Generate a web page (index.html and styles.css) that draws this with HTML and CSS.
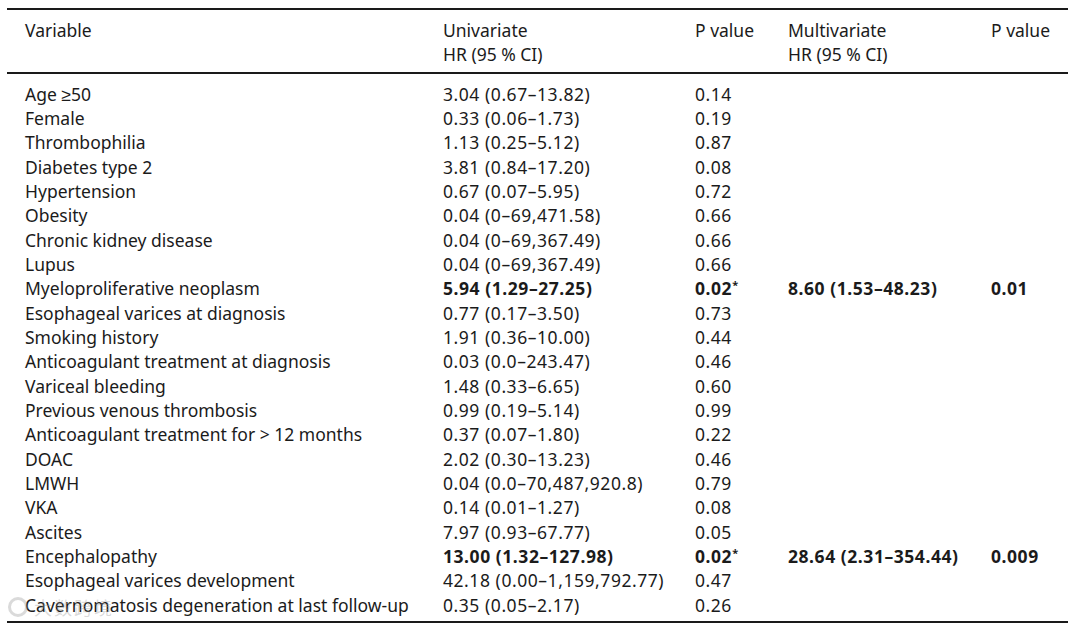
FILE: index.html
```html
<!DOCTYPE html>
<html>
<head>
<meta charset="utf-8">
<link rel="stylesheet" href="styles.css">
</head>
<body>
<div class="page">
  <table class="hr-table">
    <colgroup>
      <col class="c-var"><col class="c-uni"><col class="c-p1"><col class="c-multi"><col class="c-p2">
    </colgroup>
    <thead>
      <tr>
        <th class="first">Variable</th>
        <th>Univariate<br>HR (95 % CI)</th>
        <th>P value</th>
        <th>Multivariate<br>HR (95 % CI)</th>
        <th>P value</th>
      </tr>
    </thead>
    <tbody>
      <tr class="top"><td class="first">Age ≥50</td><td class="n">3.04 (0.67–13.82)</td><td class="n">0.14</td><td></td><td></td></tr>
      <tr><td class="first">Female</td><td class="n">0.33 (0.06–1.73)</td><td class="n">0.19</td><td></td><td></td></tr>
      <tr><td class="first">Thrombophilia</td><td class="n">1.13 (0.25–5.12)</td><td class="n">0.87</td><td></td><td></td></tr>
      <tr><td class="first">Diabetes type 2</td><td class="n">3.81 (0.84–17.20)</td><td class="n">0.08</td><td></td><td></td></tr>
      <tr><td class="first">Hypertension</td><td class="n">0.67 (0.07–5.95)</td><td class="n">0.72</td><td></td><td></td></tr>
      <tr><td class="first">Obesity</td><td class="n">0.04 (0–69,471.58)</td><td class="n">0.66</td><td></td><td></td></tr>
      <tr><td class="first">Chronic kidney disease</td><td class="n">0.04 (0–69,367.49)</td><td class="n">0.66</td><td></td><td></td></tr>
      <tr><td class="first">Lupus</td><td class="n">0.04 (0–69,367.49)</td><td class="n">0.66</td><td></td><td></td></tr>
      <tr><td class="first">Myeloproliferative neoplasm</td><td class="n b">5.94 (1.29–27.25)</td><td class="n b">0.02<sup>*</sup></td><td class="n b">8.60 (1.53–48.23)</td><td class="n b">0.01</td></tr>
      <tr><td class="first">Esophageal varices at diagnosis</td><td class="n">0.77 (0.17–3.50)</td><td class="n">0.73</td><td></td><td></td></tr>
      <tr><td class="first">Smoking history</td><td class="n">1.91 (0.36–10.00)</td><td class="n">0.44</td><td></td><td></td></tr>
      <tr><td class="first">Anticoagulant treatment at diagnosis</td><td class="n">0.03 (0.0–243.47)</td><td class="n">0.46</td><td></td><td></td></tr>
      <tr><td class="first">Variceal bleeding</td><td class="n">1.48 (0.33–6.65)</td><td class="n">0.60</td><td></td><td></td></tr>
      <tr><td class="first">Previous venous thrombosis</td><td class="n">0.99 (0.19–5.14)</td><td class="n">0.99</td><td></td><td></td></tr>
      <tr><td class="first">Anticoagulant treatment for &gt; 12 months</td><td class="n">0.37 (0.07–1.80)</td><td class="n">0.22</td><td></td><td></td></tr>
      <tr><td class="first">DOAC</td><td class="n">2.02 (0.30–13.23)</td><td class="n">0.46</td><td></td><td></td></tr>
      <tr><td class="first">LMWH</td><td class="n">0.04 (0.0–70,487,920.8)</td><td class="n">0.79</td><td></td><td></td></tr>
      <tr><td class="first">VKA</td><td class="n">0.14 (0.01–1.27)</td><td class="n">0.08</td><td></td><td></td></tr>
      <tr><td class="first">Ascites</td><td class="n">7.97 (0.93–67.77)</td><td class="n">0.05</td><td></td><td></td></tr>
      <tr><td class="first">Encephalopathy</td><td class="n b">13.00 (1.32–127.98)</td><td class="n b">0.02<sup>*</sup></td><td class="n b">28.64 (2.31–354.44)</td><td class="n b">0.009</td></tr>
      <tr><td class="first">Esophageal varices development</td><td class="n">42.18 (0.00–1,159,792.77)</td><td class="n">0.47</td><td></td><td></td></tr>
      <tr class="last"><td class="first">Cavernomatosis degeneration at last follow-up</td><td class="n">0.35 (0.05–2.17)</td><td class="n">0.26</td><td></td><td></td></tr>
    </tbody>
  </table>
  <div class="watermark"><span class="wm-logo"></span>大数跨境</div>
</div>
</body>
</html>
```
FILE: styles.css
```css
html, body {
  margin: 0;
  padding: 0;
  background: #ffffff;
}
.page {
  position: relative;
  padding: 8px 12px 0 7px;
  width: 1061px;
}
.hr-table {
  width: 1061px;
  border-collapse: collapse;
  table-layout: fixed;
  font-family: "Noto Sans", "Liberation Sans", sans-serif;
  font-size: 17.5px;
  line-height: 24.33px;
  color: #1b1b1b;
  border-top: 2px solid #1a1a1a;
  border-bottom: 2px solid #1a1a1a;
}
.c-var { width: 436px; }
.c-uni { width: 252px; }
.c-p1 { width: 93px; }
.c-multi { width: 203px; }
.c-p2 { width: 77px; }
th, td {
  padding: 0;
  text-align: left;
  vertical-align: top;
  white-space: nowrap;
}
th {
  font-weight: normal;
  padding-top: 8px;
  padding-bottom: 5px;
  border-bottom: 2px solid #1a1a1a;
}
.first { padding-left: 18px; }
.n { letter-spacing: 0.55px; }
tr.top td { padding-top: 8px; }
tr.last td { padding-bottom: 4px; }
.b { font-weight: bold; }
sup {
  font-size: 11px;
  line-height: 0;
  vertical-align: 6px;
}
.watermark {
  position: absolute;
  left: 8px;
  top: 594px;
  font-family: "Noto Sans CJK SC", sans-serif;
  font-size: 18px;
  color: rgba(150, 150, 150, 0.35);
  display: flex;
  align-items: center;
  gap: 6px;
  letter-spacing: 2px;
  pointer-events: none;
}
.wm-logo {
  width: 20px;
  height: 20px;
  border: 3px solid rgba(150, 150, 150, 0.35);
  border-radius: 50%;
  box-sizing: border-box;
}
```
